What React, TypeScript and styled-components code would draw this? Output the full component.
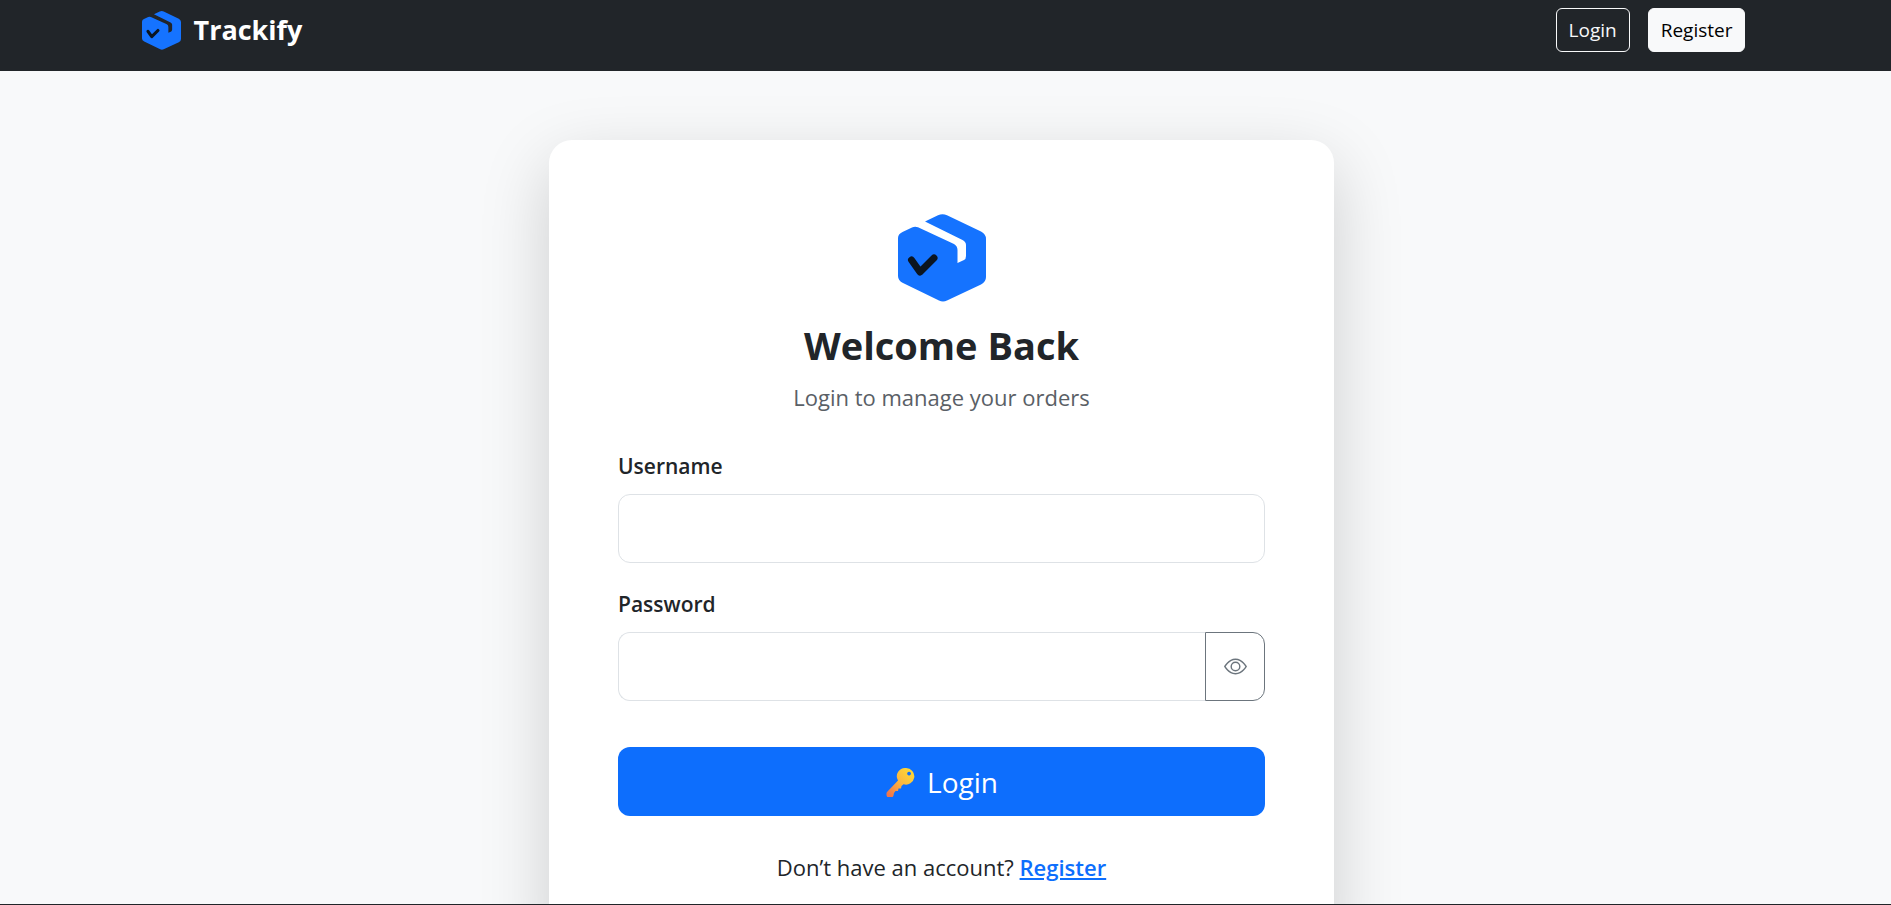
import React, { useState } from "react";
import styled, { createGlobalStyle, css } from "styled-components";

const GlobalStyle = createGlobalStyle`
  *, *::before, *::after { box-sizing: border-box; }
  body {
    margin: 0;
    background: #f8f9fa;
    color: #212529;
    font-family: "Segoe UI", "Open Sans", "Noto Sans", sans-serif;
    font-size: 22px;
    line-height: 34px;
  }
  button, input { font: inherit; }
`;

const Page = styled.div`
  display: flex;
  flex-direction: column;
  height: 100vh;
  overflow: hidden;
`;

const NavBar = styled.header`
  flex: none;
  background: #212529;
  padding: 8px 4px 19px 0;
`;

const NavInner = styled.nav`
  display: flex;
  align-items: center;
  justify-content: space-between;
  width: 85%;
  margin: 0 auto;
`;

const Brand = styled.a`
  display: flex;
  align-items: center;
  gap: 13px;
  color: #fff;
  font-size: 27px;
  font-weight: 700;
  line-height: 44px;
  text-decoration: none;
`;

const NavActions = styled.div`
  display: flex;
  gap: 18px;
`;

const NavLink = styled.a<{ $filled?: boolean }>`
  padding: 6px 12px;
  border: 1px solid #f8f9fa;
  border-radius: 6px;
  font-size: 19px;
  line-height: 30px;
  text-decoration: none;
  color: ${(p) => (p.$filled ? "#000" : "#f8f9fa")};
  background: ${(p) => (p.$filled ? "#f8f9fa" : "transparent")};
`;

const Main = styled.main`
  flex: 1;
  min-height: 0;
  overflow: hidden;
  padding: 69px 8px 0 0;
`;

const Card = styled.section`
  max-width: 785px;
  margin: 0 auto;
  padding: 74px 69px 69px;
  border-radius: 23px;
  background: #fff;
  box-shadow: 0 23px 69px rgba(0, 0, 0, 0.175);
`;

const CardHeader = styled.div`
  display: flex;
  flex-direction: column;
  align-items: center;
  margin-bottom: 35px;
`;

const Title = styled.h1`
  margin: 18px 0 10px;
  font-size: 38px;
  font-weight: 700;
  line-height: 50px;
`;

const Subtitle = styled.p`
  margin: 0;
  color: #5a6066;
`;

const Field = styled.div`
  margin-bottom: 24px;
`;

const Label = styled.label`
  display: block;
  margin-bottom: 11px;
  font-size: 21px;
  font-weight: 600;
`;

const InputRow = styled.div`
  display: flex;
`;

const fieldBox = css`
  height: 69px;
  border-radius: 12px;
  background: #fff;
`;

const TextInput = styled.input<{ $joined?: boolean }>`
  ${fieldBox}
  flex: 1;
  min-width: 0;
  padding: 0 23px;
  border: 1px solid #dee2e6;
  ${(p) => p.$joined && "border-right: 0; border-radius: 12px 0 0 12px;"}
`;

const RevealButton = styled.button`
  ${fieldBox}
  display: flex;
  align-items: center;
  justify-content: center;
  width: 60px;
  border: 1px solid #6c757d;
  border-radius: 0 12px 12px 0;
  color: #6c757d;
`;

const SubmitButton = styled.button`
  display: flex;
  align-items: center;
  justify-content: center;
  gap: 12px;
  width: 100%;
  height: 69px;
  margin: 46px 0 34px;
  border: 0;
  border-radius: 12px;
  background: #0d6efd;
  color: #fff;
  font-size: 28px;
`;

const Prompt = styled.p`
  margin: 0;
  text-align: center;
`;

const RegisterLink = styled.a`
  color: #0d6efd;
  font-weight: 600;
`;

const Footer = styled.footer`
  flex: none;
  height: 1px;
  background: #212529;
`;

function Logo({ size }: { size: number }) {
  return (
    <svg width={size} height={size} viewBox="0 0 88 88" aria-hidden="true">
      <path
        fill="#1573ff"
        d="M27 7.500L40 1.300Q44.500-.800 49 1.300L83 17.500Q88 20 88 25V63Q88 68 83 70.500L49 86.500Q45 88.500 41 86.500L5 69Q0 66.500 0 62V24Q0 20 4.500 18L14 13.500Q17 12 20 13.300L56 30Q59.500 32 59.500 36V49L66 46Q68 45 68 42V31Q68 28 64.500 26Z"
      />
      <path d="M13.500 46L22 58L36 44" fill="none" stroke="#0b1520" strokeWidth="7" strokeLinecap="round" strokeLinejoin="round" />
    </svg>
  );
}

function EyeIcon() {
  return (
    <svg width="23" height="23" viewBox="0 0 16 16" fill="currentColor" aria-hidden="true">
      <path d="M16 8s-3-5.500-8-5.500S0 8 0 8s3 5.500 8 5.500S16 8 16 8M1.173 8a13 13 0 0 1 1.660-2.043C4.120 4.668 5.880 3.500 8 3.500s3.879 1.168 5.168 2.457A13 13 0 0 1 14.828 8q-.086.130-.195.288c-.335.480-.830 1.120-1.465 1.755C11.879 11.332 10.119 12.500 8 12.500s-3.879-1.168-5.168-2.457A13 13 0 0 1 1.172 8z" />
      <path d="M8 5.500a2.500 2.500 0 1 0 0 5 2.500 2.500 0 0 0 0-5M4.500 8a3.500 3.500 0 1 1 7 0 3.500 3.500 0 0 1-7 0" />
    </svg>
  );
}

function KeyIcon() {
  return (
    <svg width="30" height="30" viewBox="0 0 30 30" aria-hidden="true">
      <defs>
        <linearGradient id="key" x1="0.9" y1="0.1" x2="0.1" y2="0.9">
          <stop offset="0" stopColor="#fdd835" />
          <stop offset="0.5" stopColor="#fbb540" />
          <stop offset="1" stopColor="#f0764b" />
        </linearGradient>
      </defs>
      <path
        fill="url(#key)"
        fillRule="evenodd"
        d="M21 1a8.300 8.300 0 1 1-2.500 16.200L16.500 19 16 21.500 13.500 21.500 13 24 10.500 24 9 26 8.500 28.500A3.600 3.600 0 0 1 1.500 27Q1.300 25.500 2.500 24.500L13 13.500A8.300 8.300 0 0 1 21 1ZM24 4.700a1.900 1.900 0 1 0 .1 0Z"
      />
    </svg>
  );
}

export default function App() {
  const [visible, setVisible] = useState(false);
  return (
    <>
      <GlobalStyle />
      <Page>
        <NavBar>
          <NavInner>
            <Brand href="#">
              <Logo size={39} />
              Trackify
            </Brand>
            <NavActions>
              <NavLink href="#login">Login</NavLink>
              <NavLink href="#register" $filled>Register</NavLink>
            </NavActions>
          </NavInner>
        </NavBar>
        <Main>
          <Card>
            <CardHeader>
              <Logo size={88} />
              <Title>Welcome Back</Title>
              <Subtitle>Login to manage your orders</Subtitle>
            </CardHeader>
            <form onSubmit={(e) => e.preventDefault()}>
              <Field>
                <Label htmlFor="username">Username</Label>
                <InputRow>
                  <TextInput id="username" type="text" autoComplete="username" />
                </InputRow>
              </Field>
              <Field>
                <Label htmlFor="password">Password</Label>
                <InputRow>
                  <TextInput id="password" type={visible ? "text" : "password"} autoComplete="current-password" $joined />
                  <RevealButton type="button" aria-label="Show password" onClick={() => setVisible(!visible)}>
                    <EyeIcon />
                  </RevealButton>
                </InputRow>
              </Field>
              <SubmitButton type="submit">
                <KeyIcon />
                Login
              </SubmitButton>
            </form>
            <Prompt>
              Don’t have an account? <RegisterLink href="#register">Register</RegisterLink>
            </Prompt>
          </Card>
        </Main>
        <Footer />
      </Page>
    </>
  );
}
